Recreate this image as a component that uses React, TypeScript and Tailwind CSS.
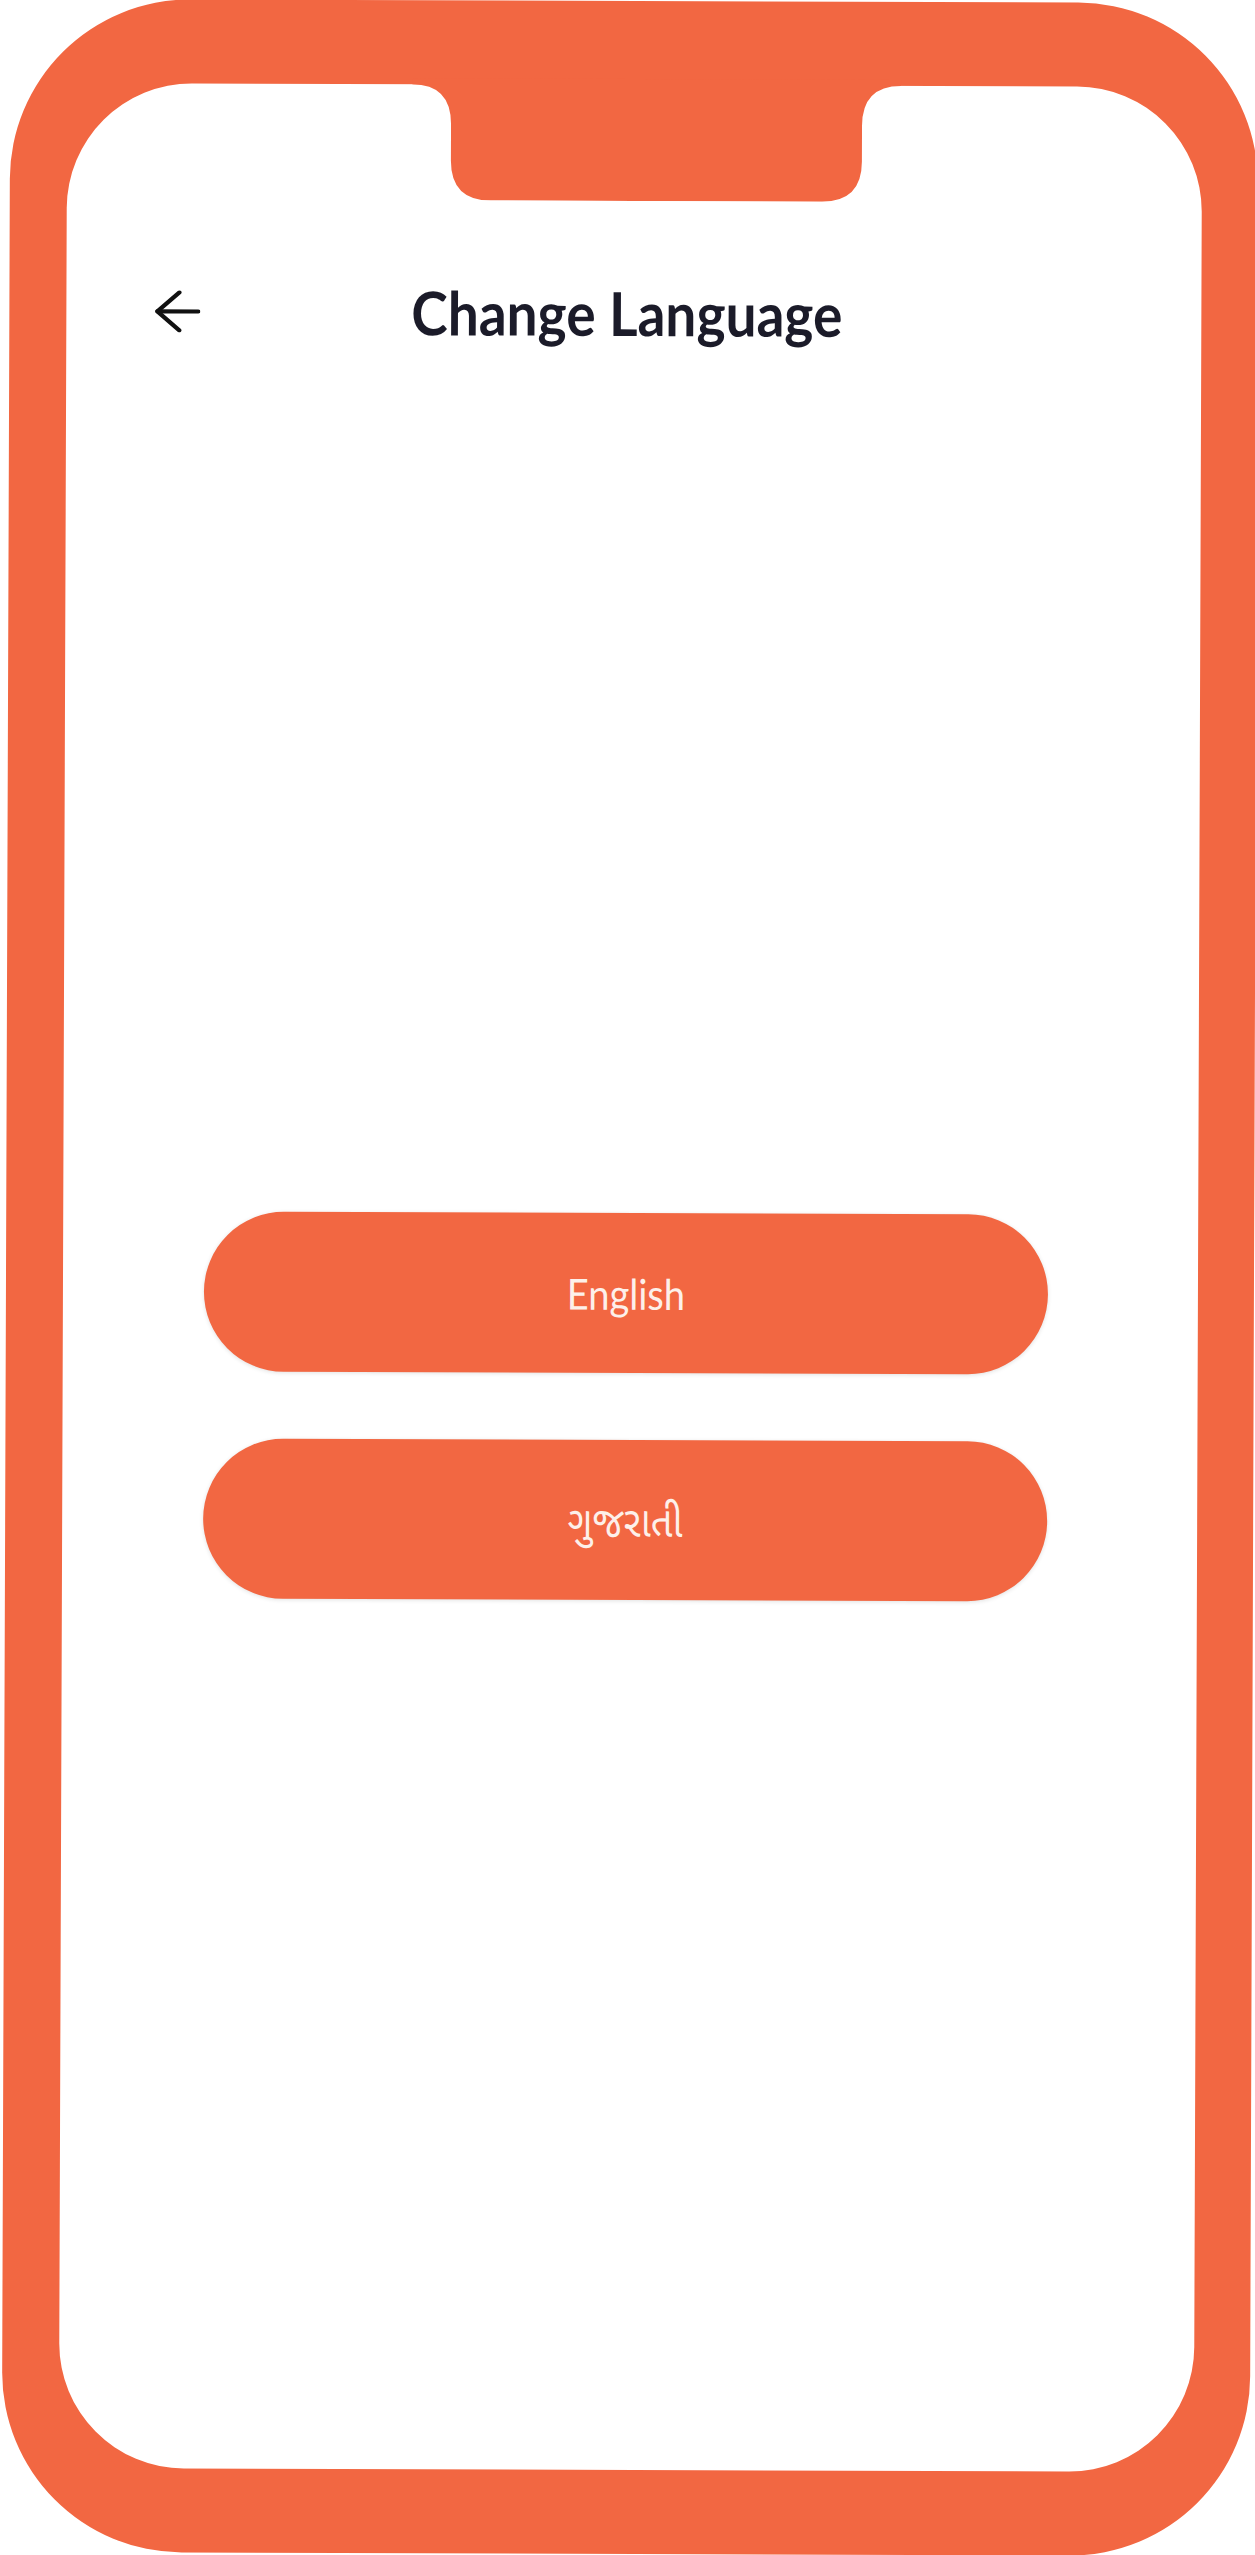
import React from "react";

const languages = ["English", "ગુજરાતી"];

const BackArrow: React.FC = () => (
  <svg width="46" height="42" viewBox="0 0 46 42" fill="none" stroke="#111111" strokeWidth="4.2" strokeLinecap="round" strokeLinejoin="round">
    <path d="M3 21H44" />
    <path d="M25 2L3 21L25 40" />
  </svg>
);

const Notch: React.FC = () => (
  <svg width="489" height="122" viewBox="0 -6 489 122" className="absolute -top-[6px] left-[345px]">
    <path
      d="M0 -6H489V0Q450 0 450 40V76Q450 116 410 116H79Q39 116 39 76V40Q39 0 0 0Z"
      fill="#f26742"
    />
  </svg>
);

export default function App() {
  return (
    <div className="w-[1255px] h-[2555px] bg-white overflow-hidden">
      <div className="ml-[6px] mt-[1px] w-[1248px] h-[2553px] rotate-[0.2deg] rounded-[180px] bg-[#f26742] pl-[57px] pr-[56px] pt-[84px] pb-[84px]">
        <div className="relative h-full w-full rounded-[125px] bg-white flex flex-col">
          <Notch />
          <div className="pt-[188px] grid grid-cols-[1fr_auto_1fr] items-center h-[268px]">
            <div className="pl-[88px] flex items-center">
              <BackArrow />
            </div>
            <h1 className="font-['Lato',sans-serif] font-bold text-[55px] leading-none text-[#1b1b29] -translate-x-[7px] scale-y-[1.1]">
              Change Language
            </h1>
            <div />
          </div>
          <div className="mt-[860px] ml-[141px] w-[844px] flex flex-col gap-[67px]">
            {languages.map((lang) => (
              <button
                key={lang}
                className="h-[160px] w-full rounded-full bg-[#f26742] shadow-[0_1px_4px_rgba(0,0,0,0.12)] flex items-center justify-center"
              >
                <span className="font-['Lato','Noto_Sans_Gujarati','Noto_Sans',sans-serif] text-[38px] leading-none text-[#fdf0ea] scale-y-[1.12]">
                  {lang}
                </span>
              </button>
            ))}
          </div>
        </div>
      </div>
    </div>
  );
}
